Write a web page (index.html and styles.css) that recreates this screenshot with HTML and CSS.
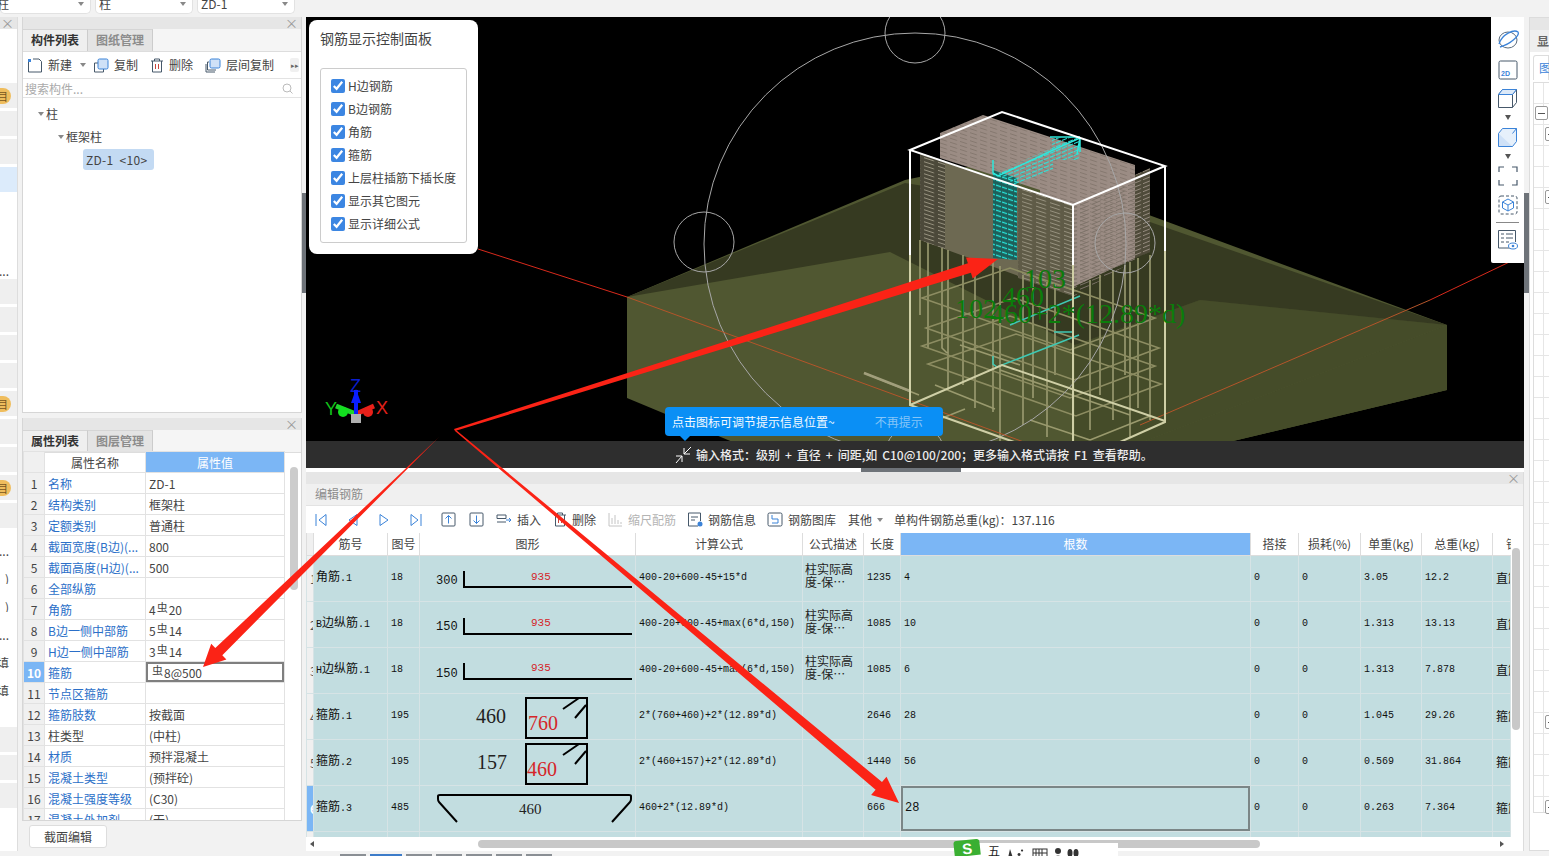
FILE: index.html
```html
<!DOCTYPE html>
<html lang="zh-CN">
<head>
<meta charset="utf-8">
<title>编辑钢筋</title>
<link rel="stylesheet" href="styles.css">
</head>
<body>
<header class="top">
  <div class="sel sel-a"><span class="clip-l">柱</span><i class="caret"></i></div>
  <div class="sel sel-b"><span>柱</span><i class="caret"></i></div>
  <div class="sel sel-c"><span>ZD-1</span><i class="caret"></i></div>
</header>

<main class="main">
  <aside class="rail">
    <div class="strip"><span class="x">×</span></div>
    <div class="rail-list">
      <div class="ri g"><b class="badge">目</b></div><div class="ri g"></div><div class="ri g"></div><div class="ri b"></div>
      <div class="ri"></div><div class="ri"></div><div class="ri t">...</div><div class="ri g"></div>
      <div class="ri g"></div><div class="ri g"></div><div class="ri g"></div><div class="ri g"><b class="badge">目</b></div>
      <div class="ri g"></div><div class="ri g"></div><div class="ri g"><b class="badge">目</b></div><div class="ri g"></div>
      <div class="ri t">(...</div><div class="ri t">)</div><div class="ri t">)</div><div class="ri t">...</div>
      <div class="ri t">填</div><div class="ri t">填</div><div class="ri"></div><div class="ri g"></div>
      <div class="ri g"></div><div class="ri g"></div>
    </div>
  </aside>

  <section class="leftcol">
    <div class="lp lp-top">
      <div class="strip"><span class="x">×</span></div>
      <div class="tabs"><span class="tab on">构件列表</span><span class="tab">图纸管理</span></div>
      <div class="ltool">
        <span class="btn"><svg width="16" height="15" viewBox="0 0 16 15"><path d="M1.500 3v11h13V3.500L12 1H6" fill="none" stroke="#46586a"/><path d="M1 1h3v3H1z" fill="#3b83d8"/></svg>新建</span>
        <i class="caret ml"></i>
        <span class="btn m1"><svg width="16" height="15" viewBox="0 0 16 15"><path d="M5 5H1.500v9h9v-3" fill="none" stroke="#46586a"/><rect x="5" y="1" width="10" height="10" rx="1.500" fill="#cfe1f7" stroke="#3b83d8"/></svg>复制</span>
        <span class="btn m2"><svg width="14" height="15" viewBox="0 0 14 15"><path d="M1 3h12M4.500 3V1h5v2M2.500 3v11h9V3" fill="none" stroke="#46586a"/><path d="M5.500 6v5M8.500 6v5" stroke="#c9443c"/></svg>删除</span>
        <span class="btn m3"><svg width="16" height="15" viewBox="0 0 16 15"><path d="M4 4H2.500v8H11M1 6v8h9" fill="none" stroke="#46586a"/><rect x="5" y="1" width="10" height="9" rx="1.500" fill="#cfe1f7" stroke="#3b83d8"/></svg>层间复制</span>
        <span class="more">▸▸</span>
      </div>
      <div class="search"><span>搜索构件...</span><svg width="11" height="11" viewBox="0 0 11 11"><circle cx="5" cy="5" r="4" fill="none" stroke="#bbb"/><path d="M8 8l2.500 2.500" stroke="#bbb"/></svg></div>
      <div class="tree">
        <div class="node n1"><i class="caret"></i>柱</div>
        <div class="node n2"><i class="caret"></i>框架柱</div>
        <div class="node n3"><span class="chip">ZD-1 &lt;10&gt;</span></div>
      </div>
    </div>

    <div class="lp lp-bot">
      <div class="strip"><span class="x">×</span></div>
      <div class="tabs"><span class="tab on">属性列表</span><span class="tab">图层管理</span></div>
      <div class="pwrap">
        <table class="ptable">
          <colgroup><col class="c-n"><col class="c-k"><col class="c-v"></colgroup>
          <thead><tr><th class="rn"></th><th>属性名称</th><th class="hl">属性值</th></tr></thead>
          <tbody>
            <tr><td class="rn">1</td><td class="k">名称</td><td>ZD-1</td></tr>
            <tr><td class="rn">2</td><td class="k">结构类别</td><td>框架柱</td></tr>
            <tr><td class="rn">3</td><td class="k">定额类别</td><td>普通柱</td></tr>
            <tr><td class="rn">4</td><td class="k">截面宽度(B边)(...</td><td>800</td></tr>
            <tr><td class="rn">5</td><td class="k">截面高度(H边)(...</td><td>500</td></tr>
            <tr><td class="rn">6</td><td class="k">全部纵筋</td><td></td></tr>
            <tr><td class="rn">7</td><td class="k">角筋</td><td>4<sup class="gr">虫</sup>20</td></tr>
            <tr><td class="rn">8</td><td class="k">B边一侧中部筋</td><td>5<sup class="gr">虫</sup>14</td></tr>
            <tr><td class="rn">9</td><td class="k">H边一侧中部筋</td><td>3<sup class="gr">虫</sup>14</td></tr>
            <tr><td class="rn sel-n">10</td><td class="k">箍筋</td><td class="sel-v"><sup class="gr">虫</sup>8@500</td></tr>
            <tr><td class="rn">11</td><td class="k">节点区箍筋</td><td></td></tr>
            <tr><td class="rn">12</td><td class="k">箍筋肢数</td><td>按截面</td></tr>
            <tr><td class="rn">13</td><td>柱类型</td><td>(中柱)</td></tr>
            <tr><td class="rn">14</td><td class="k">材质</td><td>预拌混凝土</td></tr>
            <tr><td class="rn">15</td><td class="k">混凝土类型</td><td>(预拌砼)</td></tr>
            <tr><td class="rn">16</td><td class="k">混凝土强度等级</td><td>(C30)</td></tr>
            <tr><td class="rn">17</td><td class="k">混凝土外加剂</td><td>(无)</td></tr>
          </tbody>
        </table>
        <div class="vthumb-l"></div>
      </div>
    </div>
    <div class="lfoot"><button class="edit-btn">截面编辑</button></div>
  </section>

  <div class="gut gut-l"><div class="handle"></div></div>

  <section class="centre">
    <div class="viewport">
      <svg class="scene" viewBox="306 17 1218 451" width="1218" height="451">
        <defs>
          <pattern id="stL" width="14" height="4" patternUnits="userSpaceOnUse" patternTransform="skewY(18)">
            <path d="M0 1.500h10" stroke="#96917e" stroke-width="1"/>
          </pattern>
          <pattern id="stR" width="12" height="4" patternUnits="userSpaceOnUse" patternTransform="skewY(-22)">
            <path d="M0 1.500h9" stroke="#7c7268" stroke-width="1"/>
          </pattern>
          <pattern id="stB" width="9" height="4" patternUnits="userSpaceOnUse" patternTransform="skewY(-22)">
            <path d="M0 1.500h7" stroke="#948a7e" stroke-width="1"/>
          </pattern>
          <pattern id="stT" width="10" height="4" patternUnits="userSpaceOnUse" patternTransform="skewY(18)">
            <path d="M0 1.500h7" stroke="#85786f" stroke-width="1"/>
          </pattern>
          <pattern id="stC" width="6" height="5" patternUnits="userSpaceOnUse" patternTransform="skewY(18)">
            <path d="M0 1.500h5" stroke="#28e6dc" stroke-width="1.300"/>
          </pattern>
          <pattern id="stD" width="6" height="4" patternUnits="userSpaceOnUse" patternTransform="skewY(-22)">
            <path d="M0 1.500h5" stroke="#28e6dc" stroke-width="1.200"/>
          </pattern>
          <g id="loopA" fill="none" stroke="#8d8d62" stroke-width="1.600">
            <path d="M922 298l88-30 145 50-85 32z"/>
          </g>
        </defs>

        <polygon points="627,297 905,180 1000,160 1447,325 1447,390 1120,468 795,468 627,398" fill="#505731"/>
        <polygon points="1075,468 1447,325 1447,390 1120,468" fill="#454c29"/>
        <polygon points="1075,345 1200,300 1447,325 1075,468" fill="#454c29"/>
        <polygon points="627,297 905,183 1150,222 1447,325 1200,300 1075,345 890,252" fill="#363a21"/>

        <polygon points="940,133 983,115 1135,165 1135,258 1073,287 1040,270 1040,190 940,158" fill="#9b8c84"/>
        <polygon points="940,133 983,115 1135,165 1135,258 1073,287 1040,270 1040,190 940,158" fill="url(#stT)"/>
        <polygon points="1073,205 1135,178 1135,260 1073,297" fill="url(#stR)"/>
        <polygon points="1135,175 1150,168 1150,252 1135,258" fill="#4f4b3a"/>
        <polygon points="1135,175 1150,168 1150,252 1135,258" fill="url(#stB)"/>
        <polygon points="920,153 1073,205 1073,296 920,240" fill="#6d6952"/>
        <polygon points="920,153 945,161 945,249 920,240" fill="#4c493a"/>
        <polygon points="920,153 945,161 945,249 920,240" fill="url(#stL)"/>
        <polygon points="1018,188 1073,205 1073,296 1018,278" fill="#5f5b47"/>
        <polygon points="1018,188 1073,205 1073,296 1018,278" fill="url(#stL)"/>

        <g fill="none" stroke="#9c9c72" stroke-width="1.600">
          <path d="M920 240v75M928 243v105M942 248v100l5 5M948 250v140M963 255v130M975 258v150M993 262v150M1000 266v175M1023 275v150M1033 278v120M1047 282v155M1055 285v90M1090 280v150M1100 275v120M1113 270v150M1125 265v110M1130 262v175M1138 258v150M1150 255v165"/>
        </g>
        <use href="#loopA"/>
        <use href="#loopA" transform="translate(4 30)"/>
        <use href="#loopA" transform="translate(0 48)"/>
        <use href="#loopA" transform="translate(6 66)"/>
        <g fill="none" stroke="#9a9a6e" stroke-width="1.600">
          <path d="M864 373l55 22M935 385l60 24M1030 420l60 20M1000 370l130 45M960 345l60 20M925 425l40-16M1090 440l60-24"/>
        </g>
        <path d="M864 373l46 18" stroke="#a19f7c" stroke-width="2.500"/>

        <polygon points="993,170 1017,178 1017,260 993,258" fill="#1d5f5a"/>
        <polygon points="993,170 1017,178 1017,260 993,258" fill="url(#stC)"/>
        <polygon points="997,172 1053,148 1053,170 1017,186" fill="url(#stD)"/>
        <polygon points="1052,138 1080,137 1080,160 1052,160" fill="url(#stD)"/>
        <g fill="none" stroke="#2ee8dc" stroke-width="1.500">
          <path d="M993 160v13l5 3 55-26 27-12-3 16M1050 137h30M1080 137v15"/>
          <path d="M993 356v8l4 3 82-32M1010 325l70-29M1054 332h20" stroke="#3fc9b4"/>
        </g>

        <g fill="none" stroke="#a7a7a7" stroke-width="1">
          <circle cx="915" cy="244" r="211"/>
          <circle cx="915" cy="33" r="30"/>
          <circle cx="704" cy="242" r="30"/>
          <circle cx="1125" cy="243" r="30"/>
          <circle cx="915" cy="455" r="30"/>
        </g>

        <path d="M478 249l149 48" stroke="#d82a1c" fill="none"/>
        <path d="M627 297l613 224" stroke="#b4552a" fill="none"/>
        <path d="M1140 425l290-125" stroke="#b4552a" fill="none"/>
        <path d="M1430 300l94-45" stroke="#d82a1c" fill="none"/>

        <g fill="none" stroke="#fff" stroke-width="2">
          <path d="M910 150l92-38 163 54-92 39zM910 150v105M1073 205v60M1165 166v85"/>
        </g>
        <g fill="none" stroke="#cfcfa6" stroke-width="2">
          <path d="M910 255v150l163 58 92-41V251M1073 265v180M910 405l92-40 163 56"/>
        </g>

        <g fill="#0b7d0b" font-family="'Liberation Serif',serif" font-size="28">
          <text x="1024" y="288">103</text>
          <text x="1002" y="306">460</text>
          <text x="955" y="318">102</text>
          <text x="990" y="323">460+2*(12.89*d)</text>
        </g>

        <g>
          <text x="350" y="392" class="ax" fill="#0a1ed0">Z</text>
          <text x="325" y="415" class="ax" fill="#12c21a">Y</text>
          <text x="376" y="414" class="ax" fill="#e0201a">X</text>
          <path d="M356 414l-20-8" stroke="#1fd62a" stroke-width="5"/>
          <circle cx="343" cy="412" r="5" fill="#12e01f"/>
          <path d="M356 414l18-8" stroke="#e8201a" stroke-width="5"/>
          <circle cx="368" cy="412" r="5" fill="#e8201a"/>
          <path d="M356 414v-24" stroke="#0a1eff" stroke-width="4"/>
          <path d="M351 403l5-14 5 14z" fill="#0a1eff"/>
          <rect x="351" y="414" width="10" height="9" fill="#b0b0b0"/>
        </g>
      </svg>

      <div class="ctrl">
        <div class="ctrl-t">钢筋显示控制面板</div>
        <div class="ctrl-box">
          <label class="ck"><input type="checkbox" checked>H边钢筋</label>
          <label class="ck"><input type="checkbox" checked>B边钢筋</label>
          <label class="ck"><input type="checkbox" checked>角筋</label>
          <label class="ck"><input type="checkbox" checked>箍筋</label>
          <label class="ck"><input type="checkbox" checked>上层柱插筋下插长度</label>
          <label class="ck"><input type="checkbox" checked>显示其它图元</label>
          <label class="ck"><input type="checkbox" checked>显示详细公式</label>
        </div>
      </div>

      <div class="tools3d">
        <svg width="24" height="24" viewBox="0 0 24 24"><ellipse cx="12" cy="13" rx="9" ry="8" fill="none" stroke="#5a6b7d"/><path d="M3 17C6 7 18 2 22 5c2 3-7 12-18 15" fill="none" stroke="#3b83d8" stroke-width="1.300"/></svg>
        <svg class="mt9" width="20" height="20" viewBox="0 0 20 20"><rect x="1" y="1" width="18" height="18" rx="1.500" fill="none" stroke="#46586a"/><text x="3" y="16" class="t2d">2D</text></svg>
        <svg class="mt8" width="21" height="21" viewBox="0 0 21 21"><path d="M1.500 6.500h14v13h-14zM1.500 6.500l4-5h14v13l-4 5M15.500 6.500l4-5" fill="none" stroke="#46586a"/><path d="M1.500 6.500l4-5h14l-4 5z" fill="#dce9f8" stroke="#3b83d8"/></svg>
        <i class="caret3 mt6"></i>
        <svg class="mt7" width="21" height="21" viewBox="0 0 21 21"><path d="M1.500 6.500h14v13h-14z" fill="#cfe1f7" stroke="#3b83d8"/><path d="M1.500 6.500l4-5h14v13l-4 5M15.500 6.500l4-5" fill="#e6f0fb" stroke="#3b83d8"/></svg>
        <i class="caret3 mt6"></i>
        <svg class="mt7" width="20" height="20" viewBox="0 0 20 20"><path d="M1 6V1h5M14 1h5v5M19 14v5h-5M6 19H1v-5" fill="none" stroke="#46586a" stroke-width="1.200"/></svg>
        <svg class="mt9" width="20" height="20" viewBox="0 0 20 20"><rect x="1" y="1" width="18" height="18" rx="2" fill="none" stroke="#46586a" stroke-dasharray="3 2"/><path d="M10 4l5.500 3v6L10 16l-5.500-3V7zM4.500 7l5.500 3 5.500-3M10 10v6" fill="none" stroke="#3b83d8"/></svg>
        <div class="sep3 mt7"></div>
        <svg class="mt6" width="21" height="21" viewBox="0 0 21 21"><path d="M14 19H1.500V1.500h17V13" fill="none" stroke="#46586a"/><path d="M4 5h3M9 5h7M4 9h3M9 9h7M4 13h3M9 13h3" stroke="#46586a"/><ellipse cx="16" cy="17" rx="4.500" ry="3" fill="#fff" stroke="#3b83d8"/><circle cx="16" cy="17" r="1.300" fill="#3b83d8"/></svg>
      </div>

      <div class="tip"><span>点击图标可调节提示信息位置~</span><span class="tip-no">不再提示</span><i class="tip-arrow"></i></div>

      <div class="status">
        <svg width="18" height="18" viewBox="0 0 18 18"><path d="M16 1L9 8M9 2v6h6M1 17l6-7M1 10h6v6" fill="none" stroke="#fff"/></svg>
        <span>输入格式：级别 + 直径 + 间距,如 C10@100/200；更多输入格式请按 F1 查看帮助。</span>
      </div>
    </div>

    <div class="vgut"><div class="handle-h"></div></div>

    <div class="editor">
      <div class="strip"><span class="x">×</span></div>
      <div class="ed-title">编辑钢筋</div>
      <div class="etool">
        <span class="navs">
          <svg width="12" height="14" viewBox="0 0 12 14"><path d="M1 1v12M11 1.500L4 7l7 5.500z" fill="none" stroke="#3b83d8"/></svg>
          <svg width="10" height="14" viewBox="0 0 10 14"><path d="M9 1.500L1 7l8 5.500z" fill="none" stroke="#3b83d8"/></svg>
          <svg width="10" height="14" viewBox="0 0 10 14"><path d="M1 1.500L9 7l-8 5.500z" fill="none" stroke="#3b83d8"/></svg>
          <svg width="12" height="14" viewBox="0 0 12 14"><path d="M11 1v12M1 1.500L8 7l-7 5.500z" fill="none" stroke="#3b83d8"/></svg>
        </span>
        <span class="updown">
          <svg width="15" height="15" viewBox="0 0 15 15"><rect x="1" y="1" width="13" height="13" rx="1" fill="none" stroke="#46586a"/><path d="M7.500 11.500v-8M4.500 6.500l3-3 3 3" fill="none" stroke="#3b83d8"/></svg>
          <svg width="15" height="15" viewBox="0 0 15 15"><rect x="1" y="1" width="13" height="13" rx="1" fill="none" stroke="#46586a"/><path d="M7.500 3.500v8M4.500 8.500l3 3 3-3" fill="none" stroke="#3b83d8"/></svg>
        </span>
        <span class="btn"><svg width="16" height="14" viewBox="0 0 16 14"><path d="M1 2h9v3.500H1zM1 9h9" fill="none" stroke="#46586a"/><path d="M10 7h5M13 5l2 2-2 2" fill="none" stroke="#3b83d8"/></svg>插入</span>
        <span class="btn"><svg width="14" height="15" viewBox="0 0 14 15"><path d="M1 3h12M4.500 3V1h5v2M2.500 3v11h9V3" fill="none" stroke="#46586a"/><path d="M5.500 6v5M8.500 6v5" stroke="#c9443c"/></svg>删除</span>
        <span class="btn off"><svg width="15" height="15" viewBox="0 0 15 15"><path d="M1 1v13h13M4 6v6M7 3v9M10 8v4M13 10v2" fill="none" stroke="#c4c4c4"/></svg>缩尺配筋</span>
        <span class="btn nudge"><svg width="16" height="15" viewBox="0 0 16 15"><path d="M11 14H1.500V1h12v8" fill="none" stroke="#46586a"/><path d="M4 5h7M4 8h4" stroke="#46586a"/><circle cx="13" cy="12" r="2.500" fill="#3b83d8"/></svg>钢筋信息</span>
        <span class="btn nudge"><svg width="16" height="15" viewBox="0 0 16 15"><rect x="1" y="1" width="14" height="13" rx="1.500" fill="none" stroke="#46586a"/><path d="M5 3v4M5 7h6v4H5" fill="none" stroke="#3b83d8"/></svg>钢筋图库</span>
        <span class="btn">其他<i class="caret cm"></i></span>
        <span class="total">单构件钢筋总重(kg)：137.116</span>
      </div>

      <div class="gwrap">
        <table class="gtable">
          <colgroup>
            <col class="g0"><col class="g1"><col class="g2"><col class="g3"><col class="g4"><col class="g5"><col class="g6"><col class="g7"><col class="g8"><col class="g9"><col class="g10"><col class="g11"><col class="g12">
          </colgroup>
          <thead>
            <tr><th class="gn"></th><th>筋号</th><th>图号</th><th>图形</th><th>计算公式</th><th>公式描述</th><th>长度</th><th class="hl">根数</th><th>搭接</th><th>损耗(%)</th><th>单重(kg)</th><th>总重(kg)</th><th class="clipth">钢筋</th></tr>
          </thead>
          <tbody>
            <tr>
              <td class="gn">1</td><td class="nm"><span>角筋</span>.1</td><td>18</td>
              <td class="sh"><svg width="216" height="45" viewBox="0 0 216 45"><text x="16" y="28" class="s12">300</text><path d="M44 15v16h168" class="ln"/><text x="111" y="24" class="r11">935</text></svg></td>
              <td>400-20+600-45+15*d</td><td class="ds">柱实际高度-保…</td><td>1235</td><td>4</td><td>0</td><td>0</td><td>3.05</td><td>12.2</td><td class="ty">直筋</td>
            </tr>
            <tr>
              <td class="gn">2</td><td class="nm">B<span>边纵筋</span>.1</td><td>18</td>
              <td class="sh"><svg width="216" height="45" viewBox="0 0 216 45"><text x="16" y="28" class="s12">150</text><path d="M44 16v16h168" class="ln"/><text x="111" y="24" class="r11">935</text></svg></td>
              <td>400-20+600-45+max(6*d,150)</td><td class="ds">柱实际高度-保…</td><td>1085</td><td>10</td><td>0</td><td>0</td><td>1.313</td><td>13.13</td><td class="ty">直筋</td>
            </tr>
            <tr>
              <td class="gn">3</td><td class="nm">H<span>边纵筋</span>.1</td><td>18</td>
              <td class="sh"><svg width="216" height="45" viewBox="0 0 216 45"><text x="16" y="29" class="s12">150</text><path d="M44 15v16h168" class="ln"/><text x="111" y="23" class="r11">935</text></svg></td>
              <td>400-20+600-45+max(6*d,150)</td><td class="ds">柱实际高度-保…</td><td>1085</td><td>6</td><td>0</td><td>0</td><td>1.313</td><td>7.878</td><td class="ty">直筋</td>
            </tr>
            <tr>
              <td class="gn">4</td><td class="nm"><span>箍筋</span>.1</td><td>195</td>
              <td class="sh"><svg width="216" height="45" viewBox="0 0 216 45"><text x="56" y="29" class="s20">460</text><rect x="106" y="4" width="61" height="40" class="ln"/><path d="M143 15l16-11M155 24l11-13" class="ln"/><text x="108" y="36" class="r20">760</text></svg></td>
              <td>2*(760+460)+2*(12.89*d)</td><td></td><td>2646</td><td>28</td><td>0</td><td>0</td><td>1.045</td><td>29.26</td><td class="ty">箍筋</td>
            </tr>
            <tr>
              <td class="gn">5</td><td class="nm"><span>箍筋</span>.2</td><td>195</td>
              <td class="sh"><svg width="216" height="45" viewBox="0 0 216 45"><text x="57" y="29" class="s20">157</text><rect x="106" y="4" width="61" height="40" class="ln"/><path d="M143 15l16-11M155 24l11-13" class="ln"/><text x="107" y="36" class="r20">460</text></svg></td>
              <td>2*(460+157)+2*(12.89*d)</td><td></td><td>1440</td><td>56</td><td>0</td><td>0</td><td>0.569</td><td>31.864</td><td class="ty">箍筋</td>
            </tr>
            <tr>
              <td class="gn sel-n">6</td><td class="nm"><span>箍筋</span>.3</td><td>485</td>
              <td class="sh"><svg width="216" height="45" viewBox="0 0 216 45"><path d="M37 36L19 16q-1-1-1-3V10q0-1 2-1h189q2 0 2 1v3q0 2-1 3L192 36" class="ln"/><text x="99" y="28" class="s15">460</text></svg></td>
              <td>460+2*(12.89*d)</td><td></td><td>666</td><td class="cur">28</td><td>0</td><td>0</td><td>0.263</td><td>7.364</td><td class="ty">箍筋</td>
            </tr>
            <tr><td class="gn"></td><td></td><td></td><td></td><td></td><td></td><td></td><td></td><td></td><td></td><td></td><td></td><td></td></tr>
          </tbody>
        </table>
        <div class="vthumb-g"></div>
      </div>

      <div class="hbar"><i class="ar-l"></i><div class="hthumb"></div><i class="ar-r"></i></div>
    </div>
  </section>

  <div class="gut gut-r"><div class="handle"></div></div>

  <aside class="rightp">
    <div class="strip"></div>
    <div class="r-tab1">显</div>
    <div class="r-tab2">图</div>
    <div class="rgrid">
      <i class="exp e1"></i>
      <i class="exp e2"></i>
      <i class="exp e3"></i>
      <i class="exp e4"></i>
      <i class="exp e5"></i>
    </div>
  </aside>
</main>

<footer class="tasktabs">
  <i></i><i class="on"></i><i></i><i></i><i></i><i></i><i></i>
</footer>

<svg class="arrows" width="1549" height="856" viewBox="0 0 1549 856">
  <polygon points="454,429 967.900,263.200 966,257.500 998,259 972.700,278.500 970.900,272.800 455,431" fill="#fb2316"/>
  <polygon points="440,436 222.300,655.300 226.400,659.600 203,667 211.200,643.800 215.300,648.100 438,438" fill="#fb2316"/>
  <polygon points="456,430 882,782 886.500,776.700 899,803 871.100,795.100 875.600,789.700 455,431" fill="#fb2316"/>
</svg>

<div class="ime">
  <b class="ime-s">S</b><span>五</span>
  <svg width="74" height="12" viewBox="0 0 74 12"><path d="M5 3l-2 9h5zM14 7a1.500 1.500 0 1 0 .1 0M17 3.500a1 1 0 1 0 .1 0" fill="#333"/><rect x="28" y="3" width="14" height="9" fill="none" stroke="#333"/><path d="M31 3v9M34 3v9M37 3v9M28 7h14" stroke="#333"/><circle cx="53" cy="5" r="3" fill="#333"/><path d="M48 12q5-5 10 0" fill="#333"/><ellipse cx="65" cy="7" rx="2.500" ry="4" fill="#333"/><ellipse cx="71" cy="7" rx="2.500" ry="4" fill="#333"/></svg>
</div>
</body>
</html>
```
FILE: styles.css
```css
* { box-sizing: border-box; }
html, body { margin: 0; padding: 0; }
body {
  position: relative;
  width: 1549px;
  height: 856px;
  overflow: hidden;
  background: #f2f2f2;
  color: #444;
  font: 12px/16px "Noto Sans CJK SC", "Noto Sans", sans-serif;
}
i { font-style: normal; }

.caret { display: inline-block; width: 0; height: 0; border: 3px solid transparent; border-top: 4px solid #888; border-bottom: 0; flex: none; }
.caret.ml { margin-left: 8px; }
.caret.cm { margin-left: 0; }

.top { height: 17px; display: flex; align-items: flex-start; }
.sel {
  height: 14px; background: #fff; border: 1px solid #e2e2e2; border-top: 0; border-radius: 0 0 5px 5px;
  display: flex; justify-content: space-between; align-items: flex-start;
  padding: 0 6px 0 3px; line-height: 8px;
}
.sel .caret { margin-top: 2px; }
.sel-a { width: 91px; margin-right: 4px; padding-left: 0; }
.clip-l { margin-left: -4px; }
.sel-b { width: 98px; margin-right: 4px; }
.sel-c { width: 98px; }

.main { display: flex; height: 837px; padding-bottom: 3px; }

.strip { height: 12px; background: #e6e6e6; display: flex; justify-content: flex-end; align-items: center; flex: none; }
.x { color: #999; font-size: 13px; line-height: 12px; padding-right: 3px; }

.rail { width: 18px; flex: none; margin-right: 4px; background: #fff; border-right: 1px solid #ddd; display: flex; flex-direction: column; overflow: hidden; }
.rail-list { padding-top: 54px; display: flex; flex-direction: column; gap: 3px; }
.ri { height: 25px; display: flex; justify-content: flex-end; align-items: center; overflow: hidden; padding-right: 6px; flex: none; font-size: 12px; }
.ri.g { background: #efefef; }
.ri.b { background: #dcebfb; }
.ri.t { justify-content: flex-end; white-space: nowrap; padding-top: 14px; padding-right: 8px; }
.badge { flex: none; width: 22px; height: 16px; line-height: 16px; border-radius: 8px; background: #efbd5d; color: #775520; font-weight: 400; font-size: 11px; text-align: right; padding-right: 3px; }

.leftcol { width: 280px; flex: none; display: flex; flex-direction: column; }
.lp { background: #fff; border: 1px solid #d6d6d6; border-top: 0; display: flex; flex-direction: column; flex: none; }
.lp-top { height: 396px; margin-bottom: 5px; }
.lp-bot { height: 403px; }
.tabs { height: 23px; display: flex; background: #f5f5f5; border-bottom: 1px solid #ddd; flex: none; }
.tab { width: 65px; text-align: center; line-height: 20px; background: #e4e4e4; color: #8c8c8c; border-right: 1px solid #ccc; border-top: 1px solid #d5d5d5; font-weight: 700; }
.tab.on { background: #efefef; color: #333; }

.btn { display: inline-flex; align-items: center; gap: 5px; white-space: nowrap; }
.btn.off { color: #b4b4b4; }
.nudge { margin-left: -1px; }

.ltool { height: 27px; display: flex; align-items: center; padding-left: 4px; border-bottom: 1px solid #e3e3e3; flex: none; position: relative; }
.m1 { margin-left: 7px; }
.m2 { margin-left: 12px; }
.m3 { margin-left: 12px; }
.more { margin-left: auto; margin-right: 2px; width: 9px; height: 14px; font-size: 7px; line-height: 14px; color: #666; background: #f0f0f0; border-radius: 2px; text-align: center; overflow: hidden; }
.search { height: 19px; display: flex; justify-content: space-between; align-items: center; color: #aaa; padding: 0 8px 0 2px; border-bottom: 1px solid #e3e3e3; flex: none; }
.search span { margin-top: 2px; }
.tree { padding-top: 4px; flex: 1; }
.node { height: 23px; display: flex; align-items: center; color: #444; }
.node .caret { margin-right: 2px; }
.n1 { padding-left: 15px; }
.n2 { padding-left: 35px; }
.n3 { padding-left: 60px; }
.chip { background: #c3daf3; border-radius: 3px; padding: 0 2px 0 3px; width: 71px; height: 21px; line-height: 21px; white-space: nowrap; word-spacing: 3px; letter-spacing: .3px; }

.pwrap { position: relative; height: 370px; overflow: hidden; margin-top: -2px; }
.ptable { table-layout: fixed; width: 261px; border-collapse: collapse; }
.c-n { width: 21px; }
.c-k { width: 101px; }
.c-v { width: 139px; }
.ptable th, .ptable td { height: 21px; padding: 0 3px; border: 1px solid #e2e2e2; font-weight: 400; white-space: nowrap; overflow: hidden; line-height: 15px; }
.ptable th { text-align: center; }
.ptable th.hl { background: #7bb6f5; color: #fff; }
.ptable .rn { background: #f0f0f0; text-align: center; padding: 0; color: #444; }
.ptable .sel-n { background: #7bb6f5; color: #fff; font-weight: 700; }
.ptable .k { color: #2b6fc8; }
.ptable .sel-v { box-shadow: inset 0 0 0 2px #7f7f7f; padding-left: 5px; }
.gr { font-size: 11px; line-height: 0; vertical-align: 3px; margin: 0 1px; }
.vthumb-l { position: absolute; left: 267px; top: 16px; width: 8px; height: 123px; background: #ccc; border-radius: 4px; }
.lfoot { height: 29px; padding: 4px 0 0 7px; }
.edit-btn { width: 78px; height: 23px; padding: 0; background: #fff; border: 1px solid #ddd; border-radius: 3px; font: inherit; color: #444; }

.gut { width: 4px; flex: none; }
.gut-r { width: 5px; }
.handle { width: 100%; height: 100px; margin-top: 176px; background: #6e7379; }

.centre { width: 1218px; flex: none; display: flex; flex-direction: column; }
.viewport { position: relative; height: 451px; background: #000; display: flex; flex-direction: column; justify-content: flex-end; overflow: hidden; flex: none; }
.scene { position: absolute; left: 0; top: 0; }
.scene .ax { font: 18px "Liberation Sans", sans-serif; }
.s12 { font: 12px "Liberation Mono", monospace; fill: #111; }
.r11 { font: 11px "Liberation Mono", monospace; fill: #d5262a; }
.s20 { font: 20px "Liberation Serif", serif; fill: #222; }
.r20 { font: 20px "Liberation Serif", serif; fill: #d5262a; }
.s15 { font: 15px "Liberation Serif", serif; fill: #222; }
.t2d { font: 700 7px "Liberation Sans", sans-serif; fill: #3b83d8; }
.ln { fill: none; stroke: #000; stroke-width: 2; }

.ctrl { position: absolute; left: 3px; top: 3px; width: 169px; height: 234px; background: #fff; border-radius: 8px; padding: 8px 11px 0; }
.ctrl-t { font-size: 14px; line-height: 20px; color: #444; margin-bottom: 20px; }
.ctrl-box { height: 175px; border: 1px solid #ccc; border-radius: 3px; padding: 5px 0 0 10px; }
.ck { display: flex; align-items: center; height: 23px; white-space: nowrap; color: #444; gap: 3px; }
.ck input { margin: 0; width: 14px; height: 14px; accent-color: #3c86e2; flex: none; }

.tools3d { position: absolute; right: 0; top: 0; width: 33px; height: 246px; background: #fff; display: flex; flex-direction: column; align-items: center; padding-top: 10px; border-radius: 0 0 0 2px; }
.mt6 { margin-top: 6px; }
.mt7 { margin-top: 7px; }
.mt8 { margin-top: 8px; }
.mt9 { margin-top: 9px; }
.caret3 { display: block; width: 0; height: 0; border: 3.500px solid transparent; border-top: 5px solid #555; border-bottom: 0; flex: none; }
.sep3 { width: 23px; height: 1px; background: #888; flex: none; }

.tip { position: absolute; left: 359px; top: 390px; width: 278px; height: 29px; background: #0a8ff5; color: #f4faff; border-radius: 4px; display: flex; align-items: center; padding-left: 7px; }
.tip-no { color: #86c5f7; margin-left: 40px; }
.tip-arrow { position: absolute; left: 15px; top: 29px; width: 0; height: 0; border: 5px solid transparent; border-top: 5px solid #0a8ff5; border-bottom: 0; }

.status { position: relative; height: 27px; background: #2e2e2e; color: #ececec; font-weight: 500; display: flex; align-items: center; padding-left: 369px; gap: 3px; flex: none; white-space: nowrap; word-spacing: 2.300px; }

.vgut { height: 4px; background: #fff; flex: none; display: flex; justify-content: center; }
.handle-h { width: 100px; height: 4px; background: #6e7379; margin-left: -9px; }

.editor { display: flex; flex-direction: column; height: 379px; background: #fff; border: 1px solid #dcdcdc; border-left: 0; border-top: 0; flex: none; }
.ed-title { height: 22px; line-height: 20px; background: #f0f0f0; color: #8c8c8c; padding-left: 9px; border-bottom: 1px solid #e3e3e3; flex: none; }
.etool { height: 27px; display: flex; align-items: center; padding-left: 9px; gap: 12px; flex: none; }
.navs { display: flex; gap: 21px; margin-right: 7px; }
.updown { display: flex; gap: 13px; }
.total { margin-left: -1px; white-space: nowrap; }

.gwrap { position: relative; height: 304px; overflow: hidden; flex: none; }
.gtable { table-layout: fixed; width: 1204px; border-collapse: collapse; }
.g0 { width: 7px; } .g1 { width: 74px; } .g2 { width: 32px; } .g3 { width: 216px; } .g4 { width: 167px; }
.g5 { width: 61px; } .g6 { width: 37px; } .g7 { width: 350px; } .g8 { width: 48px; } .g9 { width: 62px; }
.g10 { width: 61px; } .g11 { width: 71px; } .g12 { width: 18px; }
.gtable th { height: 22px; font-weight: 400; background: #fff; border-left: 1px solid #ddd; border-bottom: 1px solid #ddd; padding: 0; overflow: hidden; white-space: nowrap; line-height: 16px; }
.gtable th.hl { background: #7bb6f5; color: #fff; }
.gtable .clipth { text-align: left; padding-left: 13px; }
.gtable td { height: 46px; background: #c2dde0; border: 1px solid #d6e3e5; padding: 0 0 1px 3px; font: 10px/14px "Liberation Mono", monospace; color: #111; white-space: nowrap; overflow: hidden; }
.gtable .nm { padding-left: 2px; }
.gtable .nm span, .gtable .ty, .gtable .ds { font-family: "Noto Sans CJK SC", sans-serif; font-size: 12px; }
.gtable .ds { white-space: normal; line-height: 13px; padding: 0 6px 6px 2px; color: #222; }
.gtable .sh { padding: 0; }
.sh svg { display: block; }
.gtable .gn, .gtable th.gn { background: #f0f0f0; padding: 0 0 0 3px; font: 12px "Noto Sans CJK SC", sans-serif; color: #555; }
.gtable .sel-n { background: #7bb6f5; color: #fff; font-weight: 700; }
.gtable .cur { box-shadow: inset 0 0 0 2px #7b8687; font-size: 12px; padding-left: 4px; }
.vthumb-g { position: absolute; left: 1206px; top: 15px; width: 8px; height: 182px; background: #c8c8c8; border-radius: 4px; }

.hbar { position: relative; height: 14px; background: #fff; flex: none; }
.hthumb { position: absolute; left: 172px; top: 3px; width: 782px; height: 8px; background: #c8c8c8; border-radius: 4px; }
.ar-l, .ar-r { position: absolute; top: 4px; width: 0; height: 0; border: 3.500px solid transparent; }
.ar-l { left: 4px; border-right: 4px solid #555; border-left: 0; }
.ar-r { left: 1194px; border-left: 4px solid #555; border-right: 0; }

.rightp { width: 20px; flex: none; overflow: hidden; background: #fff; border: 1px solid #dcdcdc; border-right: 0; display: flex; flex-direction: column; }
.r-tab1 { height: 22px; line-height: 22px; background: #efefef; padding-left: 7px; font-weight: 700; color: #666; flex: none; }
.r-tab2 { height: 25px; margin: 3px 0 2px 3px; border: 1px solid #ddd; border-bottom: 0; border-radius: 3px 0 0 0; color: #3b83d8; line-height: 24px; padding-left: 5px; flex: none; }
.rgrid {
  height: 731px; margin-left: 3px; border: 1px solid #ddd; border-right: 0;
  background-color: #fff;
  background-image:
    repeating-linear-gradient(to bottom, transparent 0 20px, #e6e6e6 20px 21px),
    linear-gradient(to right, transparent 9px, #e6e6e6 9px 10px, transparent 10px);
  flex: none; display: flex; flex-direction: column;
}
.exp { display: block; width: 13px; height: 14px; border: 1px solid #999; border-radius: 2px; background: #fff; flex: none; position: relative; }
.exp::after { content: ""; position: absolute; left: 2px; right: 2px; top: 6px; height: 1px; background: #555; }
.e1 { margin: 23px 0 0 1px; }
.e2, .e3, .e4, .e5 { margin-left: 11px; }
.e2 { margin-top: 7px; }
.e3 { margin-top: 49px; }
.e4 { margin-top: 511px; }
.e5 { margin-top: 71px; }

.tasktabs { height: 2px; display: flex; gap: 4px; padding-left: 340px; background: #f2f2f2; }
.tasktabs i { width: 26px; height: 2px; background: #8a8f94; }
.tasktabs .on { width: 32px; background: #3d7cc9; }

.arrows { position: absolute; left: 0; top: 0; z-index: 10; pointer-events: none; }

.ime { position: absolute; left: 956px; top: 843px; z-index: 11; width: 162px; height: 13px; background: #fff; display: flex; align-items: flex-start; gap: 5px; padding-left: 32px; color: #222; line-height: 15px; overflow: visible; }
.ime svg { margin-top: 3px; }
.ime span { font-size: 12px; }
.ime-s { position: absolute; left: -2px; top: -3px; width: 26px; height: 16px; background: #3aaf32; color: #fff; font: 700 15px/18px "Liberation Sans", sans-serif; text-align: center; border-radius: 3px 3px 0 0; transform: rotate(-6deg); overflow: hidden; }
```
